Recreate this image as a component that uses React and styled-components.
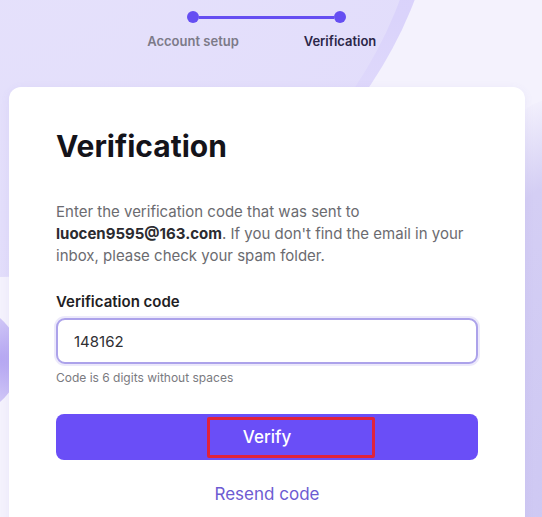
import React from "react";
import styled, { createGlobalStyle } from "styled-components";

const Global = createGlobalStyle`
  html, body { margin: 0; padding: 0; }
  body { font-family: Inter, "Noto Sans", Arial, sans-serif; background: #f4f2fd; }
`;

const Page = styled.div`
  position: relative;
  width: 542px;
  height: 517px;
  overflow: hidden;
  background: #f4f2fd;
`;

const Blob = styled.div`
  position: absolute;
  border-radius: 50%;
  pointer-events: none;
`;

const BigDisc = styled(Blob)`
  left: -427px;
  top: -577px;
  width: 854px;
  height: 854px;
  background: radial-gradient(
    circle at 50% 50%,
    #e6e2fb 0%,
    #e2ddfb 79%,
    #c8bbfa 88%,
    #a38df8 95%,
    #8f77f5 100%
  );
`;

const OuterRing = styled(Blob)`
  left: -411px;
  top: -580px;
  width: 854px;
  height: 854px;
  background: linear-gradient(180deg, #d0c7fa 0%, #dad3fb 70%, #ebe7fc 100%);
`;

const RightGlow = styled(Blob)`
  left: 440px;
  top: 100px;
  width: 220px;
  height: 720px;
  background: radial-gradient(ellipse at 50% 55%, #cec8f3 0%, #d4cef4 55%, rgba(244, 242, 253, 0) 72%);
`;

const LeftGlow = styled(Blob)`
  left: -120px;
  top: 300px;
  width: 140px;
  height: 120px;
  background: radial-gradient(ellipse at 80% 50%, #b4a5f2 0%, #d0c7f7 50%, rgba(228, 224, 248, 0) 80%);
`;

const Content = styled.div`
  position: relative;
  display: flex;
  flex-direction: column;
`;

const Stepper = styled.div`
  width: 257px;
  margin: 11px 0 0 138px;
  display: flex;
  flex-direction: column;
  gap: 10px;
`;

const Track = styled.div`
  display: flex;
  align-items: center;
  padding: 0 49px;
`;

const Dot = styled.span`
  width: 12px;
  height: 12px;
  border-radius: 50%;
  background: #654ef2;
  flex: none;
`;

const Line = styled.span`
  flex: 1;
  height: 3px;
  background: #654ef2;
`;

const Labels = styled.div`
  display: flex;
  justify-content: space-between;
`;

const StepLabel = styled.span`
  width: 110px;
  text-align: center;
  font-size: 13px;
  line-height: 16px;
  font-weight: 600;
  color: ${(p) => (p.$active ? "#2b2648" : "#7c7a88")};
`;

const Card = styled.div`
  margin: 38px 0 0 9px;
  width: 516px;
  height: 460px;
  box-sizing: border-box;
  padding: 41px 47px 0;
  background: #ffffff;
  border-radius: 12px;
  box-shadow: 0 2px 10px rgba(120, 100, 200, 0.08);
  display: flex;
  flex-direction: column;
`;

const Title = styled.h1`
  margin: 0;
  font-size: 30px;
  line-height: 36px;
  font-weight: 700;
  color: #14131a;
  letter-spacing: 0;
`;

const Intro = styled.p`
  margin: 37px 0 0;
  font-size: 15px;
  line-height: 22px;
  color: #6b6b70;
  b {
    font-weight: 700;
    color: #2b2b30;
  }
`;

const FieldLabel = styled.label`
  margin-top: 25px;
  font-size: 15px;
  line-height: 20px;
  font-weight: 600;
  color: #1f1e24;
`;

const Input = styled.input`
  margin-top: 6px;
  box-sizing: border-box;
  width: 100%;
  height: 46px;
  padding: 0 16px;
  border: 2px solid #aca2ea;
  border-radius: 9px;
  box-shadow: 0 0 0 2px rgba(150, 135, 235, 0.18);
  font-family: inherit;
  font-size: 15px;
  color: #2f2f33;
  background: #fff;
  outline: none;
`;

const Hint = styled.div`
  margin-top: 6px;
  font-size: 12px;
  line-height: 16px;
  color: #7a7a80;
`;

const Button = styled.button`
  position: relative;
  margin-top: 28px;
  width: 100%;
  height: 46px;
  border: none;
  border-radius: 8px;
  background: #6a4ef7;
  color: #fff;
  font-family: inherit;
  font-size: 17px;
  font-weight: 500;
  cursor: pointer;
`;

const Highlight = styled.span`
  position: absolute;
  left: 151px;
  top: 3px;
  width: 168px;
  height: 41px;
  box-sizing: border-box;
  border: 3px solid #e0233a;
  border-radius: 2px;
`;

const Resend = styled.a`
  margin-top: 23px;
  align-self: center;
  font-size: 17px;
  line-height: 22px;
  color: #6d5bd2;
  text-decoration: none;
  cursor: pointer;
`;

export default function App() {
  return (
    <>
      <Global />
      <Page>
        <RightGlow />
        <OuterRing />
        <BigDisc />
        <LeftGlow />
        <Content>
          <Stepper>
            <Track>
              <Dot />
              <Line />
              <Dot />
            </Track>
            <Labels>
              <StepLabel>Account setup</StepLabel>
              <StepLabel $active>Verification</StepLabel>
            </Labels>
          </Stepper>
          <Card>
            <Title>Verification</Title>
            <Intro>
              Enter the verification code that was sent to{" "}
              <b>luocen9595@163.com</b>. If you don't find the email in your
              inbox, please check your spam folder.
            </Intro>
            <FieldLabel htmlFor="code">Verification code</FieldLabel>
            <Input id="code" defaultValue="148162" />
            <Hint>Code is 6 digits without spaces</Hint>
            <Button>
              Verify
              <Highlight />
            </Button>
            <Resend>Resend code</Resend>
          </Card>
        </Content>
      </Page>
    </>
  );
}
